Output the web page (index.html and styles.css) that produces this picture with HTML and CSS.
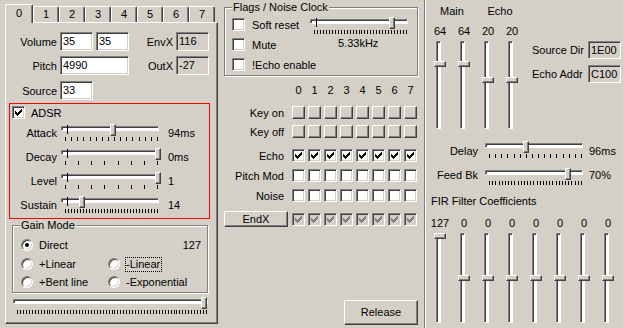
FILE: index.html
```html
<!DOCTYPE html>
<html lang="en">
<head>
    <meta charset="UTF-8">
    <title>DSP</title>
    <link rel="stylesheet" href="styles.css">
</head>
<body>

<svg class="defs"><symbol id="chk" viewBox="0 0 7 7"><path d="M0 2h1v3h-1zM1 3h1v3h-1zM2 4h1v3h-1zM3 3h1v3h-1zM4 2h1v3h-1zM5 1h1v3h-1zM6 0h1v3h-1z"/></symbol></svg>

<div class="dlg">

    <!-- voice settings -->
    <div class="voices">
        <div class="tabs">
            <div class="tab sel">0</div>
            <div class="tab">1</div>
            <div class="tab">2</div>
            <div class="tab">3</div>
            <div class="tab">4</div>
            <div class="tab">5</div>
            <div class="tab">6</div>
            <div class="tab">7</div>
        </div>
        <div class="panel">
            <div class="row r-vol">
                <span class="lbl">Volume</span>
                <div class="edit">35</div>
                <div class="edit">35</div>
                <span class="lbl2">EnvX</span>
                <div class="edit ro">116</div>
            </div>
            <div class="row r-pitch">
                <span class="lbl">Pitch</span>
                <div class="edit wide">4990</div>
                <span class="lbl2">OutX</span>
                <div class="edit ro">-27</div>
            </div>
            <div class="row r-src">
                <span class="lbl">Source</span>
                <div class="edit">33</div>
            </div>

            <div class="adsr">
                <div class="r-chk">
                    <span class="cb"><svg class="ck"><use href="#chk"/></svg></span>
                    <span class="cap">ADSR</span>
                </div>
                <div class="srow">
                    <span class="slbl">Attack</span>
                    <div class="hs"><div class="trk"></div><div class="mk"></div><div class="th" style="left:49px"></div><div class="tk" data-n="16"></div></div>
                    <span class="sval">94ms</span>
                </div>
                <div class="srow">
                    <span class="slbl">Decay</span>
                    <div class="hs"><div class="trk"></div><div class="mk"></div><div class="th" style="left:94px"></div><div class="tk" data-n="8"></div></div>
                    <span class="sval">0ms</span>
                </div>
                <div class="srow">
                    <span class="slbl">Level</span>
                    <div class="hs"><div class="trk"></div><div class="mk"></div><div class="th" style="left:94px"></div><div class="tk" data-n="8"></div></div>
                    <span class="sval">1</span>
                </div>
                <div class="srow">
                    <span class="slbl">Sustain</span>
                    <div class="hs"><div class="trk"></div><div class="mk"></div><div class="th" style="left:18px"></div><div class="tk" data-n="32"></div></div>
                    <span class="sval">14</span>
                </div>
            </div>

            <div class="grp gain">
                <span class="legend">Gain Mode</span>
                <div class="rrow">
                    <div class="opt"><span class="rb on"></span><span>Direct</span></div>
                    <span class="gval">127</span>
                </div>
                <div class="rrow">
                    <div class="opt"><span class="rb"></span><span>+Linear</span></div>
                    <div class="opt"><span class="rb"></span><span class="focus">-Linear</span></div>
                </div>
                <div class="rrow">
                    <div class="opt"><span class="rb"></span><span>+Bent line</span></div>
                    <div class="opt"><span class="rb"></span><span>-Exponential</span></div>
                </div>
            </div>
            <div class="hs gslide"><div class="trk"></div><div class="th" style="left:188px"></div><div class="tk" data-n="65"></div></div>
        </div>
    </div>

    <!-- flags and per voice bits -->
    <div class="mid">
        <div class="grp flags">
            <span class="legend">Flags / Noise Clock</span>
            <div class="fl-left">
                <div class="crow"><span class="cb"></span><span class="cap">Soft reset</span></div>
                <div class="crow"><span class="cb"></span><span class="cap">Mute</span></div>
                <div class="crow"><span class="cb"></span><span class="cap">!Echo enable</span></div>
            </div>
            <div class="fl-right">
                <div class="hs"><div class="trk"></div><div class="mk"></div><div class="th" style="left:79px"></div><div class="tk" data-n="32"></div></div>
                <div class="khz">5.33kHz</div>
            </div>
        </div>

        <div class="bits">
            <div class="brow hdr">
                <span class="blbl"></span>
                <span class="bx">0</span><span class="bx">1</span><span class="bx">2</span><span class="bx">3</span>
                <span class="bx">4</span><span class="bx">5</span><span class="bx">6</span><span class="bx">7</span>
            </div>
            <div class="brow r-kon">
                <span class="blbl">Key on</span>
                <span class="pb"></span><span class="pb"></span><span class="pb"></span><span class="pb"></span>
                <span class="pb"></span><span class="pb"></span><span class="pb"></span><span class="pb"></span>
            </div>
            <div class="brow r-koff">
                <span class="blbl">Key off</span>
                <span class="pb"></span><span class="pb"></span><span class="pb"></span><span class="pb"></span>
                <span class="pb"></span><span class="pb"></span><span class="pb"></span><span class="pb"></span>
            </div>
            <div class="brow r-echo">
                <span class="blbl">Echo</span>
                <span class="cb"><svg class="ck"><use href="#chk"/></svg></span>
                <span class="cb"><svg class="ck"><use href="#chk"/></svg></span>
                <span class="cb"><svg class="ck"><use href="#chk"/></svg></span>
                <span class="cb"><svg class="ck"><use href="#chk"/></svg></span>
                <span class="cb"><svg class="ck"><use href="#chk"/></svg></span>
                <span class="cb"><svg class="ck"><use href="#chk"/></svg></span>
                <span class="cb"><svg class="ck"><use href="#chk"/></svg></span>
                <span class="cb"><svg class="ck"><use href="#chk"/></svg></span>
            </div>
            <div class="brow r-pmod">
                <span class="blbl">Pitch Mod</span>
                <span class="cb"></span><span class="cb"></span><span class="cb"></span><span class="cb"></span>
                <span class="cb"></span><span class="cb"></span><span class="cb"></span><span class="cb"></span>
            </div>
            <div class="brow r-noise">
                <span class="blbl">Noise</span>
                <span class="cb"></span><span class="cb"></span><span class="cb"></span><span class="cb"></span>
                <span class="cb"></span><span class="cb"></span><span class="cb"></span><span class="cb"></span>
            </div>
            <div class="brow r-endx">
                <div class="btn endx">EndX</div>
                <span class="cb dis"><svg class="ck"><use href="#chk"/></svg></span>
                <span class="cb dis"><svg class="ck"><use href="#chk"/></svg></span>
                <span class="cb dis"><svg class="ck"><use href="#chk"/></svg></span>
                <span class="cb dis"><svg class="ck"><use href="#chk"/></svg></span>
                <span class="cb dis"><svg class="ck"><use href="#chk"/></svg></span>
                <span class="cb dis"><svg class="ck"><use href="#chk"/></svg></span>
                <span class="cb dis"><svg class="ck"><use href="#chk"/></svg></span>
                <span class="cb dis"><svg class="ck"><use href="#chk"/></svg></span>
            </div>
        </div>

        <div class="btn release">Release</div>
    </div>

    <div class="sep"></div>

    <!-- main / echo -->
    <div class="right">
        <div class="vol">
            <div class="vgrid">
                <span class="vh">Main</span>
                <span class="vh">Echo</span>
                <span class="vn">64</span><span class="vn">64</span><span class="vn">20</span><span class="vn">20</span>
                <div class="vs"><div class="vtrk"></div><div class="vth" style="top:20px"></div></div>
                <div class="vs"><div class="vtrk"></div><div class="vth" style="top:20px"></div></div>
                <div class="vs"><div class="vtrk"></div><div class="vth" style="top:36px"></div></div>
                <div class="vs"><div class="vtrk"></div><div class="vth" style="top:36px"></div></div>
            </div>
            <div class="addr">
                <div class="arow"><span class="albl">Source Dir</span><div class="edit ro">1E00</div></div>
                <div class="arow"><span class="albl">Echo Addr</span><div class="edit ro">C100</div></div>
            </div>
        </div>

        <div class="drow r-delay">
            <span class="dlbl">Delay</span>
            <div class="hs"><div class="trk"></div><div class="th" style="left:38px"></div><div class="tk" data-n="16"></div></div>
            <span class="dval">96ms</span>
        </div>
        <div class="drow r-fb">
            <span class="dlbl">Feed Bk</span>
            <div class="hs"><div class="trk"></div><div class="th" style="left:80px"></div><div class="tk" data-n="30"></div></div>
            <span class="dval">70%</span>
        </div>

        <div class="fir-t">FIR Filter Coefficients</div>
        <div class="fir">
            <span class="vn">127</span><span class="vn">0</span><span class="vn">0</span><span class="vn">0</span>
            <span class="vn">0</span><span class="vn">0</span><span class="vn">0</span><span class="vn">0</span>
            <div class="vs tall"><div class="vtrk"></div><div class="vth" style="top:0"></div></div>
            <div class="vs tall"><div class="vtrk"></div><div class="vth" style="top:42px"></div></div>
            <div class="vs tall"><div class="vtrk"></div><div class="vth" style="top:42px"></div></div>
            <div class="vs tall"><div class="vtrk"></div><div class="vth" style="top:42px"></div></div>
            <div class="vs tall"><div class="vtrk"></div><div class="vth" style="top:42px"></div></div>
            <div class="vs tall"><div class="vtrk"></div><div class="vth" style="top:42px"></div></div>
            <div class="vs tall"><div class="vtrk"></div><div class="vth" style="top:42px"></div></div>
            <div class="vs tall"><div class="vtrk"></div><div class="vth" style="top:42px"></div></div>
        </div>
    </div>
</div>

<script>
    // tick marks under the trackbars, spread like the win32 control does
    var ticks = document.querySelectorAll('.tk');
    ticks.forEach(function (tk) {
        var n = +tk.dataset.n;
        var w = tk.offsetWidth - 1;
        for (var i = 0; i < n; i++) {
            var t = document.createElement('i');
            t.style.left = Math.round(i * w / (n - 1)) + 'px';
            tk.appendChild(t);
        }
    });
</script>
</body>
</html>
```

FILE: styles.css
```css
* {
    box-sizing: border-box;
}
body {
    margin: 0;
    background-color: #d4d0c8;
    color: #000;
    font-family: "Liberation Sans", Arial, sans-serif;
    font-size: 11px;
}
.defs {
    display: none;
}
.dlg {
    display: flex;
    width: 623px;
    height: 328px;
    overflow: hidden;
    white-space: nowrap;
}

/* ---- win classic bits ---- */
.edit {
    flex: none;
    width: 33px;
    height: 19px;
    margin-right: 3px;
    padding-left: 2px;
    line-height: 17px;
    border: 1px solid;
    border-color: #808080 #fff #fff #808080;
    box-shadow: inset 1px 1px #404040, inset -1px -1px #d4d0c8;
    background-color: #fff;
}
.edit.wide {
    width: 69px;
}
.edit.ro {
    background-color: #d4d0c8;
}
.cb {
    flex: none;
    width: 13px;
    height: 13px;
    border: 1px solid;
    border-color: #808080 #fff #fff #808080;
    box-shadow: inset 1px 1px #404040, inset -1px -1px #d4d0c8;
    background-color: #fff;
}
.ck {
    display: block;
    width: 7px;
    height: 7px;
    margin: 2px 0 0 2px;
    fill: #000;
    shape-rendering: crispEdges;
}
.cb.dis {
    background-color: #d4d0c8;
}
.cb.dis .ck {
    fill: #808080;
}
.pb {
    flex: none;
    width: 13px;
    height: 13px;
    border: 1px solid;
    border-color: #fff #404040 #404040 #fff;
    box-shadow: inset -1px -1px #808080;
}
.btn {
    flex: none;
    text-align: center;
    border: 1px solid;
    border-color: #fff #404040 #404040 #fff;
    box-shadow: inset -1px -1px #808080;
}
.rb {
    position: relative;
    flex: none;
    width: 12px;
    height: 12px;
    margin-right: 6px;
    border-radius: 50%;
    border: 1px solid;
    border-color: #808080 #fff #fff #808080;
    box-shadow: inset 1px 1px #404040, inset -1px -1px #d4d0c8;
    background-color: #fff;
}
.rb.on::after {
    content: '';
    position: absolute;
    left: 3px;
    top: 3px;
    width: 4px;
    height: 4px;
    border-radius: 50%;
    background-color: #000;
}
.grp {
    position: relative;
    flex: none;
    border: 1px solid #808080;
    box-shadow: inset 1px 1px #fff, 1px 1px #fff;
}
.legend {
    position: absolute;
    top: -7px;
    left: 7px;
    padding: 0 1px;
    line-height: 13px;
    background-color: #d4d0c8;
}

/* horizontal trackbar */
.hs {
    position: relative;
    flex: none;
    width: 100px;
    height: 19px;
}
.trk {
    position: absolute;
    left: 0;
    right: 2px;
    top: 2px;
    height: 5px;
    border: 1px solid;
    border-color: #808080 #fff #fff #808080;
    box-shadow: inset 1px 1px #404040;
    background-color: #fff;
}
.mk {
    position: absolute;
    left: 6px;
    top: 1px;
    width: 1px;
    height: 9px;
    background-color: #000;
}
.th {
    position: absolute;
    top: 0;
    width: 6px;
    height: 12px;
    border: 1px solid;
    border-color: #fff #404040 #404040 #fff;
    box-shadow: inset -1px -1px #808080;
    background-color: #d4d0c8;
}
.tk {
    position: absolute;
    left: 4px;
    right: 3px;
    top: 13px;
    height: 4px;
}
.tk i {
    position: absolute;
    top: 0;
    width: 1px;
    height: 4px;
    background-color: #000;
}

/* vertical trackbar */
.vs {
    position: relative;
    width: 12px;
    height: 88px;
}
.vs.tall {
    height: 90px;
}
.vtrk {
    position: absolute;
    left: 2px;
    top: 0;
    bottom: 0;
    width: 5px;
    border: 1px solid;
    border-color: #808080 #fff #fff #808080;
    box-shadow: inset 1px 1px #404040;
    background-color: #fff;
}
.vth {
    position: absolute;
    left: 0;
    width: 12px;
    height: 6px;
    border: 1px solid;
    border-color: #fff #404040 #404040 #fff;
    box-shadow: inset -1px -1px #808080;
    background-color: #d4d0c8;
}

/* ---- left column ---- */
.voices {
    flex: none;
    width: 220px;
}
.tabs {
    position: relative;
    z-index: 1;
    display: flex;
    align-items: flex-end;
    height: 18px;
    margin-top: 4px;
    padding-left: 5px;
}
.tab {
    width: 26px;
    height: 16px;
    line-height: 14px;
    text-align: center;
    border: 1px solid;
    border-bottom: 0;
    border-color: #fff #404040 #fff #fff;
    border-radius: 2px 2px 0 0;
    box-shadow: inset -1px 0 #808080;
    background-color: #d4d0c8;
}
.tab.sel {
    width: 28px;
    height: 19px;
    margin-bottom: -1px;
    line-height: 16px;
}
.panel {
    width: 213px;
    height: 302px;
    margin-left: 5px;
    border: 1px solid;
    border-color: #fff #404040 #404040 #fff;
    box-shadow: inset -1px -1px #808080;
}
.row {
    display: flex;
    align-items: center;
    height: 19px;
}
.r-vol {
    margin-top: 9px;
}
.r-pitch {
    margin-top: 5px;
}
.r-src {
    margin-top: 6px;
}
.lbl {
    width: 51px;
    margin-right: 3px;
    text-align: right;
}
.lbl2 {
    width: 41px;
    margin-right: 3px;
    text-align: right;
}
.adsr {
    width: 201px;
    height: 116px;
    margin: 3px 0 0 3px;
    border: 1px solid #f00;
}
.r-chk {
    display: flex;
    align-items: center;
    height: 13px;
    margin: 2px 0 1px 2px;
}
.cap {
    margin-left: 6px;
}
.srow {
    display: flex;
    align-items: flex-start;
    margin-top: 5px;
}
.slbl {
    width: 47px;
    margin: 3px 4px 0 0;
    line-height: 13px;
    text-align: right;
}
.sval {
    margin: 3px 0 0 7px;
    line-height: 13px;
}
.gain {
    width: 196px;
    height: 68px;
    margin: 6px 0 0 6px;
}
.rrow {
    display: flex;
    align-items: center;
    height: 12px;
    margin-top: 7px;
    padding-left: 8px;
}
.rrow:first-of-type {
    margin-top: 13px;
}
.rrow:last-child {
    margin-top: 6px;
}
.opt {
    display: flex;
    align-items: center;
    width: 87px;
}
.focus {
    margin-left: -1px;
    padding-right: 1px;
    line-height: 13px;
    border: 1px dotted #000;
}
.gval {
    margin: 0 6px 0 auto;
}
.gslide {
    width: 197px;
    margin: 4px 0 0 7px;
}

/* ---- middle column ---- */
.mid {
    flex: none;
    width: 204px;
}
.flags {
    display: flex;
    width: 194px;
    height: 69px;
    margin: 7px 0 0 4px;
}
.fl-left {
    width: 85px;
    padding: 10px 0 0 7px;
}
.crow {
    display: flex;
    align-items: center;
    height: 13px;
    margin-bottom: 7px;
}
.crow .cap {
    margin-left: 7px;
}
.fl-right {
    padding-top: 9px;
}
.khz {
    margin: 1px 0 0 28px;
    line-height: 13px;
}
.bits {
    margin-top: 8px;
}
.brow {
    display: flex;
    align-items: center;
}
.brow .cb, .brow .pb, .bx {
    margin-right: 3px;
}
.blbl {
    width: 64px;
    margin-right: 8px;
    text-align: right;
}
.bx {
    width: 13px;
    line-height: 13px;
    text-align: center;
}
.r-kon {
    margin-top: 9px;
}
.r-koff {
    margin-top: 6px;
}
.r-echo {
    margin-top: 11px;
}
.r-pmod, .r-noise {
    margin-top: 7px;
}
.r-endx {
    margin-top: 9px;
}
.endx {
    width: 64px;
    height: 16px;
    margin: 0 4px;
    line-height: 14px;
}
.release {
    width: 74px;
    height: 25px;
    margin: 73px 0 0 124px;
    line-height: 23px;
}
.sep {
    flex: none;
    width: 2px;
    border-left: 1px solid #808080;
    background-color: #fff;
}

/* ---- right column ---- */
.right {
    flex: none;
    width: 197px;
    padding-left: 2px;
}
.vol {
    display: flex;
}
.vgrid {
    display: grid;
    grid-template-columns: repeat(4, 24px);
    justify-items: center;
    align-items: start;
}
.vh {
    grid-column: span 2;
    margin-top: 5px;
    line-height: 13px;
}
.vgrid .vn {
    margin-top: 7px;
    line-height: 13px;
}
.vgrid .vs {
    margin-top: 3px;
}
.addr {
    margin: 41px 0 0 8px;
}
.arow {
    display: flex;
    align-items: center;
    height: 18px;
    margin-bottom: 6px;
}
.arow .edit {
    height: 18px;
    line-height: 16px;
}
.albl {
    width: 56px;
}
.drow {
    display: flex;
    align-items: flex-start;
}
.dlbl {
    width: 50px;
    margin-right: 7px;
    line-height: 13px;
    text-align: right;
}
.dval {
    margin-left: 4px;
    line-height: 13px;
}
.r-delay {
    margin-top: 12px;
}
.r-delay .dlbl, .r-delay .dval {
    margin-top: 4px;
}
.r-fb {
    margin-top: 8px;
}
.r-fb .dlbl, .r-fb .dval {
    margin-top: 1px;
}
.fir-t {
    margin: 8px 0 0 3px;
    line-height: 13px;
}
.fir {
    display: grid;
    grid-template-columns: repeat(8, 24px);
    justify-items: center;
}
.fir .vn {
    margin-top: 9px;
    line-height: 13px;
}
.fir .vs {
    margin-top: 3px;
}
```
